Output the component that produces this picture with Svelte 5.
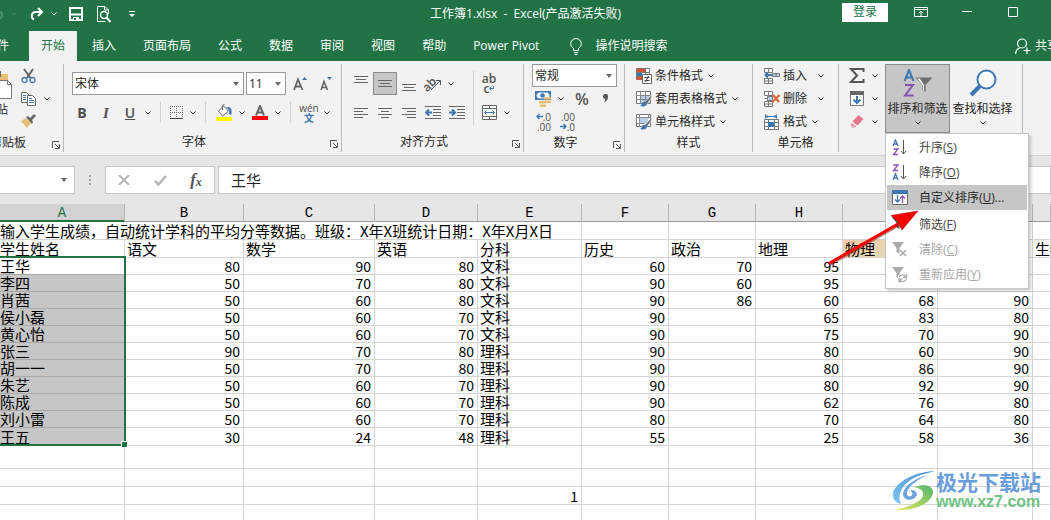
<script lang="ts">
  type Cell = string | number;

  const tabs = ['插入', '页面布局', '公式', '数据', '审阅', '视图', '帮助', 'Power Pivot'];

  const columns = [
    { name: 'A', width: 125 },
    { name: 'B', width: 119 },
    { name: 'C', width: 131 },
    { name: 'D', width: 103 },
    { name: 'E', width: 104 },
    { name: 'F', width: 87 },
    { name: 'G', width: 87 },
    { name: 'H', width: 87 },
    { name: 'I', width: 95 },
    { name: 'J', width: 95 },
  ];

  const headings: Cell[] = ['学生姓名', '语文', '数学', '英语', '分科', '历史', '政治', '地理', '物理', '', '生物'];

  const students: Cell[][] = [
    ['王华', 80, 90, 80, '文科', 60, 70, 95, '', '', ''],
    ['李四', 50, 70, 80, '文科', 90, 60, 95, '', '', ''],
    ['肖茜', 50, 60, 80, '文科', 90, 86, 60, 68, 90, ''],
    ['侯小磊', 50, 60, 70, '文科', 90, '', 65, 83, 80, ''],
    ['黄心怡', 50, 60, 70, '文科', 90, '', 75, 70, 90, ''],
    ['张三', 90, 70, 80, '理科', 90, '', 80, 60, 90, ''],
    ['胡一一', 50, 70, 80, '理科', 90, '', 80, 86, 90, ''],
    ['朱艺', 50, 60, 70, '理科', 90, '', 80, 92, 90, ''],
    ['陈成', 50, 60, 70, '理科', 90, '', 62, 76, 80, ''],
    ['刘小雷', 50, 60, 70, '理科', 80, '', 70, 64, 80, ''],
    ['王五', 30, 24, 48, '理科', 55, '', 25, 58, 36, ''],
  ];

  const blank: Cell[] = Array(11).fill('');
  const tail: Cell[][] = [blank, blank, blank.map((c, i) => (i === 4 ? 1 : c)), blank];

  const menu = [
    { icon: 'asc', text: '升序', key: 'S' },
    { icon: 'desc', text: '降序', key: 'O' },
    { icon: 'custom', text: '自定义排序', key: 'U', more: true, active: true },
    { icon: 'filter', text: '筛选', key: 'F', divided: true },
    { icon: 'clear', text: '清除', key: 'C', disabled: true },
    { icon: 'reapply', text: '重新应用', key: 'Y', disabled: true },
  ];

  let fontName = $state('宋体');
  let fontSize = $state('11');
  let numberFormat = $state('常规');
  let formula = $state('王华');
  let cellName = $state('');
</script>

{#snippet chev()}
  <svg class="chev" width="6" height="4" viewBox="0 0 6 4"><path d="M.5 .5 3 3 5.500 .5" /></svg>
{/snippet}

{#snippet drop(label: string)}
  <button class="drop" aria-label={label}>{@render chev()}</button>
{/snippet}

{#snippet launcher(label: string)}
  <button class="launcher" aria-label={label}>
    <svg width="8" height="8" viewBox="0 0 8 8" fill="none" stroke="#555"><path d="M.5 7V.5H7M3 3l4 4M7.500 3v4.500H3" /></svg>
  </button>
{/snippet}

{#snippet lines(rows: number[][])}
  <svg width="16" height="16" viewBox="0 0 16 16" stroke="#666">
    {#each rows as [x1, x2, y]}
      <path d="M{x1} {y}.5H{x2}" />
    {/each}
  </svg>
{/snippet}

{#snippet indent(right: boolean)}
  <svg width="16" height="14" viewBox="0 0 16 14" fill="none" stroke="#666">
    <path d="M0 .5h16M8 3.500h8M8 6.500h8M8 9.500h8M0 12.500h16" />
    {#if right}
      <path d="M0 6.500h5M3 3.500l3 3-3 3" stroke="#3c78b4" stroke-width="2" />
    {:else}
      <path d="M7 6.500H2M4 3.500l-3 3 3 3" stroke="#3c78b4" stroke-width="2" />
    {/if}
  </svg>
{/snippet}

{#snippet tableIcon(kind: string)}
  <svg width="16" height="16" viewBox="0 0 16 16" fill="none">
    {#if kind === 'cond'}
      <path d="M.5 .5h13v11H.5zM9.500 .5v11M.5 4.500h13M.5 8.500h13" stroke="#777" fill="#fff" />
      <path d="M1 1h8v3H1zM1 9h5v3H1z" fill="#d8512f" />
      <path d="M1 5h5v3H1z" fill="#3c78b4" />
      <path d="M6.500 6.500h9v9h-9z" fill="#fff" stroke="#666" />
      <path d="M8.500 9.500h5M8.500 12.500h5M12.500 8l-3 6" stroke="#444" />
    {:else}
      <path d="M.5 .5h14v12H.5z" fill="#fff" stroke="#777" />
      <path d={kind === 'table' ? 'M5 5h9v7H5z' : 'M4 4h8v5H4z'} fill="#b7cde8" />
      <path d={kind === 'table' ? 'M.5 4.500h14M.5 8.500h14M4.500 .5v12M9.500 .5v12' : 'M.5 3.500h14M3.500 .5v12M.5 9.500h8M12.500 .5v4'} stroke="#8a8a8a" />
      <path d="M15.500 4 9 11l2 2 4.500-7z" fill="#666" stroke="#f2f2f2" stroke-width=".5" />
      <path d="M9 10.500c-3 0-2.500 3-5 4.500 4 1 7 0 7-2.500z" fill="#3c78b4" />
    {/if}
  </svg>
{/snippet}

{#snippet cellsIcon(kind: string)}
  <svg width="16" height="16" viewBox="0 0 16 16" fill="none" stroke="#777">
    {#if kind === 'format'}
      <path d="M1 2.500h12M1.500 .5v4M12.500 .5v4M3.500 1 2 2.500 3.500 4M10.500 1 12 2.500 10.500 4" stroke="#3c78b4" />
      <path d="M.5 5.500h14v10H.5zM4.500 5.500v10M10.500 5.500v10M.5 8.500h14M.5 12.500h14" fill="#fff" />
      <path d="M4 8h6v5H4z" fill="#3c78b4" stroke="none" />
    {:else}
      <path d="M.5 .5h8v4h-8zM4.500 .5v4M.5 10.500h8v5h-8zM4.500 10.500v5M.5 13h8" fill="#fff" />
      {#if kind === 'insert'}
        <path d="M8.500 5.500h7v3h-7zM12 5.500v3" fill="#b7cde8" />
        <path d="M8 7H2M4 4.500 1.500 7 4 9.500" stroke="#3c78b4" stroke-width="2" />
      {:else}
        <path d="M.5 7.500h3M3.500 5.500h5v4h-5z" fill="#b7cde8" />
        <path d="m9 4 6 7M15.500 4 8.500 11" stroke="#d9603b" stroke-width="2" />
      {/if}
    {/if}
  </svg>
{/snippet}

{#snippet funnel(color: string)}
  <path d="M0 1h12L7.500 7v6l-3-2V7z" fill={color} />
{/snippet}

{#snippet menuIcon(kind: string)}
  <svg width="16" height="17" viewBox="0 0 16 17" fill="none">
    {#if kind === 'asc' || kind === 'desc'}
      {@const up = kind === 'asc'}
      <path d={up ? 'M1 7 3.500 1 6 7M2 5h3' : 'M1 16 3.500 10 6 16M2 14h3'} stroke="#3c78b4" stroke-width="1.300" />
      <path d={up ? 'M1.500 10H6l-4.500 5.500H6' : 'M1.500 1H6L1.500 6.500H6'} stroke="#8a50b0" stroke-width="1.300" />
      <path d="M11.500 1v14M9 12l2.500 3 2.500-3" stroke="#555" />
    {:else if kind === 'custom'}
      <path d="M.5 1.500h15v14H.5z" fill="#fff" stroke="#666" />
      <path d="M0 1h16v4H0z" fill="#3c78b4" />
      <path d="M5.500 6v7M3 10.500 5.500 13 8 10.500" stroke="#3c78b4" stroke-width="1.300" />
      <path d="M10.500 14V7M8 9.500 10.500 7l2.500 2.500" stroke="#8a50b0" stroke-width="1.300" />
    {:else if kind === 'filter'}
      {@render funnel('#555')}
    {:else}
      {@render funnel('#aaa')}
      {#if kind === 'clear'}
        <path d="m8 9 6 6M14 9l-6 6" stroke="#aaa" stroke-width="1.500" />
      {:else}
        <path d="M6 9h8v7H6z" fill="#fff" />
        <path d="M7 11a4 4 0 0 1 7 0M14.500 8v3.500H11M14.500 13a4 4 0 0 1-7 1M7 16.500V13h3.500" stroke="#aaa" stroke-width="1.300" />
      {/if}
    {/if}
  </svg>
{/snippet}

<div class="app">
  <header class="titlebar">
    <div class="quick">
      <button class="tool dim" aria-label="撤销">
        <svg width="14" height="14" viewBox="0 0 14 14" fill="none" stroke="currentColor" stroke-width="2"><path d="M4 1 1 4l3 3M1 4h8a4 4 0 0 1 0 8" /></svg>
      </button>
      <button class="drop dim" aria-label="撤销列表">{@render chev()}</button>
      <button class="tool next" aria-label="恢复">
        <svg width="15" height="14" viewBox="0 0 15 14" fill="none" stroke="#fff" stroke-width="2"><path d="M9 1l4 4-4 4M13 5H6a4 4 0 0 0-1 7.500" /></svg>
      </button>
      {@render drop('恢复列表')}
      <button class="tool next" aria-label="保存">
        <svg width="14" height="14" viewBox="0 0 14 14" fill="none" stroke="#fff"><path d="M1 1h12v12H1z" stroke-width="2" /><path d="M2 7.500h10" stroke-width="2" /><path d="M4 10h6v4H4z" fill="#fff" stroke="none" /><path d="M5 11h2v2H5z" fill="#217346" stroke="none" /></svg>
      </button>
      <button class="tool next" aria-label="打印预览">
        <svg width="15" height="17" viewBox="0 0 15 17" fill="none" stroke="#fff"><path d="M11.500 8V4L8 .5H.5v15h8M7.500 .5V4h4" /><circle cx="7" cy="9" r="3.500" stroke-width="1.500" /><path d="m9.500 11.500 4 4.500" stroke-width="2" /></svg>
      </button>
      <button class="tool next" aria-label="自定义快速访问工具栏">
        <svg width="6" height="7" viewBox="0 0 6 7" fill="#fff"><path d="M0 0h6v1H0zM0 3h6L3 6z" /></svg>
      </button>
    </div>
    <h1>工作簿1.xlsx&nbsp; -&nbsp; Excel(产品激活失败)</h1>
    <div class="window-controls">
      <button class="login">登录</button>
      <button class="win" aria-label="功能区显示选项">
        <svg width="14" height="10" viewBox="0 0 14 10" fill="none" stroke="#fff"><path d="M.5 .5h13v9H.5zM.5 2.500h13M7 9V4M5 6l2-2 2 2" /></svg>
      </button>
      <button class="win" aria-label="最小化">
        <svg width="10" height="10" viewBox="0 0 10 10" stroke="#fff"><path d="M0 4.500h10" /></svg>
      </button>
      <button class="win" aria-label="最大化">
        <svg width="10" height="10" viewBox="0 0 10 10" fill="none" stroke="#fff"><path d="M.5 .5h9v9h-9z" /></svg>
      </button>
    </div>
  </header>

  <nav class="tabs">
    <button class="tab file">文件</button>
    <button class="tab current">开始</button>
    {#each tabs as tab}
      <button class="tab">{tab}</button>
    {/each}
    <button class="tell">
      <svg width="12" height="17" viewBox="0 0 12 17" fill="none" stroke="#fff"><path d="M3.500 12.500v-2C2 9 .7 8 .7 5.800a5.300 5.300 0 0 1 10.600 0C11.300 8 10 9 8.500 10.500v2zM4 14.500h4M4.500 16.500h3" /></svg>
      操作说明搜索
    </button>
    <button class="share">
      <svg width="16" height="17" viewBox="0 0 16 17" fill="none" stroke="#fff"><circle cx="7" cy="5.500" r="4.500" stroke-width="1.200" /><path d="M.6 16c0-3 1.500-5 4-6M12 9.500v6.500M8.500 12.500h7" stroke-width="1.200" /></svg>
      共享
    </button>
  </nav>

  <div class="ribbon">
    <section class="group clipboard">
      <div class="body">
        <button class="paste">
          <svg width="32" height="28" viewBox="0 0 32 28" fill="none"><path d="M2 3h26v20H2z" fill="#e9be73" /><path d="M9 0h12v6H9z" fill="#6a6a6a" /><path d="M15.500 9.500h12l4 4v14h-16zM27.500 9.500v4h4" fill="#fff" stroke="#777" /></svg>
          <span>粘贴</span>
          {@render chev()}
        </button>
        <div class="stack">
          <div class="row">
            <button class="tool" aria-label="剪切">
              <svg width="16" height="16" viewBox="0 0 16 16" fill="none"><path d="m3 1 6.500 9M12 1 6 10" stroke="#666" stroke-width="2" /><circle cx="3.500" cy="12" r="2.500" stroke="#3c78b4" stroke-width="1.300" /><circle cx="11.500" cy="12" r="2.500" stroke="#3c78b4" stroke-width="1.300" /></svg>
            </button>
          </div>
          <div class="row">
            <button class="tool" aria-label="复制">
              <svg width="16" height="14" viewBox="0 0 16 14" fill="#fff" stroke="#666"><path d="M.5 .5h5l2 2v8h-7z" /><path d="M2 3.500h3M2 5.500h3M2 7.500h3" stroke="#3c78b4" /><path d="M6.500 3.500h5l3 3v7h-8z" /><path d="M8 6.500h3M8 8.500h5M8 10.500h5" stroke="#3c78b4" /></svg>
            </button>
            {@render drop('复制选项')}
          </div>
          <div class="row">
            <button class="tool" aria-label="格式刷">
              <svg width="16" height="15" viewBox="0 0 16 15"><path d="M0 7l5-3 5 5-4 5z" fill="#e9be73" /><path d="m5 3 2-1 2 2 4-4 2 2-4 4 1 2-1 2z" fill="#666" /></svg>
            </button>
          </div>
        </div>
      </div>
      <footer><span>剪贴板</span>{@render launcher('剪贴板设置')}</footer>
    </section>

    <section class="group font">
      <div class="body rows">
        <div class="row boxes">
          <div class="combo name">
            <select bind:value={fontName} aria-label="字体"><option>宋体</option></select>
          </div>
          <div class="combo size">
            <select bind:value={fontSize} aria-label="字号"><option>11</option></select>
          </div>
          <button class="tool" aria-label="增大字号">
            <svg width="14" height="15" viewBox="0 0 14 15" fill="none"><path d="m1 14 4-10.500L9.500 14M2.500 10.500h5.500" stroke="#666" stroke-width="1.800" /><path d="M9 4h5l-2.500-3z" fill="#3c78b4" /></svg>
          </button>
          <button class="tool" aria-label="减小字号">
            <svg width="14" height="15" viewBox="0 0 14 15" fill="none"><path d="m2 14 3-8.500L8.500 14M3 11.500h4.500" stroke="#666" stroke-width="1.600" /><path d="M8 1h5l-2.500 3z" fill="#3c78b4" /></svg>
          </button>
        </div>
        <div class="row">
          <button class="tool letter bold">B</button>
          <button class="tool letter italic">I</button>
          <button class="tool letter underline">U</button>
          {@render drop('下划线')}
          <span class="rule"></span>
          <button class="tool narrow" aria-label="边框">
            <svg width="14" height="14" viewBox="0 0 14 14" fill="none" stroke="#666"><path d="M0 .5h13M.5 0v12M6.500 0v12M12.500 0v12M0 6.500h13" stroke-dasharray="1 1" /><path d="M0 12.500h13" stroke="#444" /></svg>
          </button>
          {@render drop('边框样式')}
          <span class="rule"></span>
          <button class="tool" aria-label="填充颜色">
            <svg width="16" height="17" viewBox="0 0 16 17" fill="none"><path d="m7.500 2 5 5-6 5-4-5z" fill="#fff" stroke="#666" /><path d="M6.500 6V2q0-2 2-1" stroke="#666" /><path d="M10 3q5-.500 5.500 3v5l-2.500-1V6z" fill="#3c78b4" /><path d="M0 13h16v4H0z" fill="#ff0" /></svg>
          </button>
          {@render drop('填充颜色列表')}
          <button class="tool" aria-label="字体颜色">
            <svg width="16" height="15" viewBox="0 0 16 15" fill="none"><path d="M4 10.500 8 1l4 9.500M5.500 7.500h5" stroke="#666" stroke-width="2" /><path d="M0 11h16v4H0z" fill="red" /></svg>
          </button>
          {@render drop('字体颜色列表')}
          <span class="rule"></span>
          <button class="tool phonetic"><span>wén</span><b>文</b></button>
          {@render drop('拼音选项')}
        </div>
      </div>
      <footer><span>字体</span>{@render launcher('字体设置')}</footer>
    </section>

    <section class="group align">
      <div class="body">
        <div class="rows">
          <div class="row">
            <button class="tool" aria-label="顶端对齐">{@render lines([[1, 15, 0], [3, 13, 3], [1, 15, 6]])}</button>
            <button class="tool on" aria-label="垂直居中">{@render lines([[1, 15, 4], [3, 13, 7], [1, 15, 10]])}</button>
            <button class="tool" aria-label="底端对齐">{@render lines([[1, 15, 8], [3, 13, 11], [1, 15, 14]])}</button>
            <button class="tool" aria-label="方向">
              <svg width="18" height="16" viewBox="0 0 18 16" fill="none"><text x="-2" y="12" transform="rotate(-45 6 8)" font-size="12" font-weight="600" fill="#555">ab</text><path d="m7 14 9-9M12 4.500h4.500V9" stroke="#555" /></svg>
            </button>
            {@render drop('方向选项')}
          </div>
          <div class="row">
            <button class="tool" aria-label="左对齐">{@render lines([[1, 15, 3], [1, 10, 6], [1, 15, 9], [1, 10, 12]])}</button>
            <button class="tool" aria-label="居中">{@render lines([[1, 15, 3], [4, 12, 6], [1, 15, 9], [4, 12, 12]])}</button>
            <button class="tool" aria-label="右对齐">{@render lines([[1, 15, 3], [6, 15, 6], [1, 15, 9], [6, 15, 12]])}</button>
            <button class="tool" aria-label="减少缩进量">{@render indent(false)}</button>
            <button class="tool" aria-label="增加缩进量">{@render indent(true)}</button>
          </div>
        </div>
        <span class="rule tall"></span>
        <div class="rows">
          <div class="row">
            <button class="tool wrap">
              <span>ab</span>
              <span>c<svg width="5" height="5" viewBox="0 0 5 5" fill="none" stroke="#3c78b4"><path d="M4.500 0v2.500H1M2.500 .5l-2 2 2 2" /></svg></span>
            </button>
          </div>
          <div class="row">
            <button class="tool" aria-label="合并后居中">
              <svg width="15" height="15" viewBox="0 0 15 15" fill="#fff" stroke="#666"><path d="M.5 .5h14v14H.5zM.5 3.500h14M.5 11.500h14M7.500 .5v3M7.500 11.500v3" /><path d="M3 7.500h9M4.500 5.500l-2 2 2 2M10.500 5.500l2 2-2 2" fill="none" stroke="#3c78b4" /></svg>
            </button>
            {@render drop('合并选项')}
          </div>
        </div>
      </div>
      <footer><span>对齐方式</span>{@render launcher('对齐设置')}</footer>
    </section>

    <section class="group number">
      <div class="body stack">
        <div class="combo format">
          <select bind:value={numberFormat} aria-label="数字格式"><option>常规</option></select>
        </div>
        <div class="row">
          <button class="tool" aria-label="会计数字格式">
            <svg width="16" height="16" viewBox="0 0 16 16"><path d="M0 0h16v9H0z" fill="#3c78b4" /><path d="M1.500 1.500h13v6h-13z" fill="#fff" /><path d="M1 1h3L1 4zM15 1v3l-3-3zM1 8V5l3 3z" fill="#3c78b4" /><circle cx="7.500" cy="4.500" r="2.300" fill="#3c78b4" /><path d="M9 6h7v2.500H9zM9 9.500h7V12H9zM4 10h6v2.500H4zM5 13.500h6V16H5z" fill="#e9be73" /></svg>
          </button>
          {@render drop('货币列表')}
          <button class="tool percent">%</button>
          <button class="tool" aria-label="千位分隔样式">
            <svg width="6" height="9" viewBox="0 0 6 9"><path d="M2.500 0A2.300 2.300 0 0 1 5 2.500C5 5 4 7 1 8.500c.7-1.500 1.300-2.500 1.300-3.700A2.400 2.400 0 0 1 2.500 0z" fill="#555" /></svg>
          </button>
        </div>
        <div class="row">
          <button class="tool decimals">
            <span><svg width="7" height="7" viewBox="0 0 7 7" fill="none" stroke="#3c78b4" stroke-width="1.500"><path d="M7 3.500H1M3.500 1 1 3.500 3.500 6" /></svg>.0</span>
            <span>.00</span>
          </button>
          <button class="tool decimals">
            <span>.00</span>
            <span><svg width="7" height="7" viewBox="0 0 7 7" fill="none" stroke="#3c78b4" stroke-width="1.500"><path d="M0 3.500h6M3.500 1 6 3.500 3.500 6" /></svg>.0</span>
          </button>
        </div>
      </div>
      <footer><span>数字</span>{@render launcher('数字设置')}</footer>
    </section>

    <section class="group styles">
      <div class="body stack">
        <button class="command">{@render tableIcon('cond')}<span>条件格式</span>{@render chev()}</button>
        <button class="command">{@render tableIcon('table')}<span>套用表格格式</span>{@render chev()}</button>
        <button class="command">{@render tableIcon('cell')}<span>单元格样式</span>{@render chev()}</button>
      </div>
      <footer><span>样式</span></footer>
    </section>

    <section class="group cells">
      <div class="body stack">
        <button class="command split">{@render cellsIcon('insert')}<span>插入</span>{@render chev()}</button>
        <button class="command split">{@render cellsIcon('delete')}<span>删除</span>{@render chev()}</button>
        <button class="command">{@render cellsIcon('format')}<span>格式</span>{@render chev()}</button>
      </div>
      <footer><span>单元格</span></footer>
    </section>

    <section class="group editing">
      <div class="body">
        <div class="stack">
          <div class="row">
            <button class="tool" aria-label="自动求和">
              <svg width="16" height="15" viewBox="0 0 16 15" fill="none" stroke="#555" stroke-width="2"><path d="M14.500 4V1H2l6 6.500L2 14h12.500v-3" /></svg>
            </button>
            {@render drop('求和选项')}
          </div>
          <div class="row">
            <button class="tool" aria-label="填充">
              <svg width="14" height="15" viewBox="0 0 14 15" fill="none"><path d="M.5 .5h13v14H.5z" fill="#fff" stroke="#777" /><path d="M0 0h14v4H0z" fill="#666" /><path d="M7 5v7M3.500 8.500 7 12l3.500-3.500" stroke="#3c78b4" stroke-width="2" /></svg>
            </button>
            {@render drop('填充选项')}
          </div>
          <div class="row">
            <button class="tool" aria-label="清除">
              <svg width="14" height="13" viewBox="0 0 14 13"><path d="m8.500 0 5 4-6 6.500-5-4z" fill="#e8768a" /><path d="m2 7.500 4.500 4-1.500 1H2L.5 10z" fill="#f0a0ae" /></svg>
            </button>
            {@render drop('清除选项')}
          </div>
        </div>
        <div class="big-wrap">
          <button class="big on" aria-haspopup="menu" aria-expanded="true">
            <svg width="30" height="28" viewBox="0 0 30 28" fill="none"><path d="M1.500 12 6 1l4.500 11M3 8.500h6" stroke="#3c78b4" stroke-width="2" /><path d="M2 16h8L2 26.500h8.500" stroke="#8a50b0" stroke-width="2" /><path d="M12.500 8.500h17L22.500 16v7l-3-2v-5z" fill="#707070" /><path d="M14.500 9.500h2l4.500 6v6h-1v-5z" fill="#fff" /></svg>
            <span>排序和筛选</span>
            {@render chev()}
          </button>
          <div class="menu" role="menu">
            {#each menu as item}
              <button class="item" class:active={item.active} class:divided={item.divided} disabled={item.disabled} role="menuitem">
                {@render menuIcon(item.icon)}
                <span>{item.text}(<u>{item.key}</u>){item.more ? '...' : ''}</span>
              </button>
            {/each}
            <svg class="pointer" width="92" height="56" viewBox="0 0 92 56">
              <path d="M1 54.500 69 15.500" stroke="#7a1010" stroke-opacity=".5" stroke-width="4" />
              <path d="M1 53.500 70 14" stroke="#f00" stroke-width="3" />
              <path d="M90 1 63 5.500 69 11 74 20z" fill="#f00" stroke="#b01010" stroke-width=".6" />
            </svg>
          </div>
        </div>
        <button class="big">
          <svg width="28" height="28" viewBox="0 0 28 28" fill="none" stroke="#3c78b4"><circle cx="17.500" cy="10.500" r="9" fill="#fff" stroke-width="2" /><path d="M11 17 2 26" stroke-width="4" /></svg>
          <span>查找和选择</span>
          {@render chev()}
        </button>
      </div>
      <footer></footer>
    </section>
  </div>

  <div class="formula-bar">
    <div class="combo cell-name"><input bind:value={cellName} aria-label="名称框" /></div>
    <span class="dots"><i></i><i></i><i></i></span>
    <div class="entry">
      <button aria-label="取消"><svg width="12" height="10" viewBox="0 0 12 10" stroke="#b5b5b5" stroke-width="2"><path d="m1 0 10 10M11 0 1 10" /></svg></button>
      <button aria-label="输入"><svg width="13" height="11" viewBox="0 0 13 11" fill="none" stroke="#b5b5b5" stroke-width="2.500"><path d="m1 6 3.500 3.500L12 1" /></svg></button>
      <button class="fx">f<small>x</small></button>
    </div>
    <input class="formula" bind:value={formula} aria-label="编辑栏" />
  </div>

  <table>
    <colgroup>
      {#each columns as col}
        <col style="width: {col.width}px" />
      {/each}
      <col />
    </colgroup>
    <thead>
      <tr>
        {#each columns as col, i}
          <th class:picked={i === 0}>{col.name}</th>
        {/each}
        <th></th>
      </tr>
    </thead>
    <tbody>
      <tr class="high">
        <td colspan="5">输入学生成绩，自动统计学科的平均分等数据。班级：X年X班统计日期：X年X月X日</td>
        {#each Array(6) as _}
          <td></td>
        {/each}
      </tr>
      <tr class="high">
        {#each headings as text}
          <td class:shaded={text === '物理'}>{text}</td>
        {/each}
      </tr>
      {#each students as row, r}
        <tr class:high={r === students.length - 1}>
          {#each row as cell, c}
            <td class:num={typeof cell === 'number'} class:selected={c === 0} class:origin={c === 0 && r === 0}>
              {cell}
              {#if c === 0 && r === 0}<span class="selection"></span>{/if}
            </td>
          {/each}
        </tr>
      {/each}
      {#each tail as row, r}
        <tr class={r === 0 ? 'higher' : 'high'}>
          {#each row as cell}
            <td class:num={cell !== ''}>{cell}</td>
          {/each}
        </tr>
      {/each}
    </tbody>
  </table>

  <div class="brand">
    <svg width="44" height="42" viewBox="0 0 44 42">
      <defs>
        <linearGradient id="sky" x1="1" y1="0" x2="0" y2="1"><stop offset="0" stop-color="#4a90d0" /><stop offset="1" stop-color="#7cc4f0" /></linearGradient>
        <linearGradient id="leaf" x1="1" y1="0" x2="0" y2="1"><stop offset="0" stop-color="#4fb86c" /><stop offset="1" stop-color="#e6e860" /></linearGradient>
      </defs>
      <path d="M43 1C22 2 4 12 1 23c-1 7 4 10 8 11-4-8 0-20 15-27C30 4 37 3 43 1z" fill="url(#sky)" />
      <path d="M36 5C24 8 12 15 11 24c0 7 11 8 14 1 0-4-4-6-8-4 3 0 4 2 3 4-2 3-6 1-5-3C17 15 27 9 36 5z" fill="#6aa5de" />
      <path d="M22 17c11-4 20-1 19 6C39 34 22 41 4 40c12-3 26-8 27-15 1-5-4-7-9-8z" fill="url(#leaf)" />
    </svg>
    <div>
      <strong>极光下载站</strong>
      <span>www.xz7.com</span>
    </div>
  </div>
</div>

<style>
  :global(body) {
    background: #fff;
  }

  .app {
    position: relative;
    height: 100vh;
    overflow: hidden;
    font: 12px/16px 'Open Sans', 'Noto Sans CJK SC', sans-serif;
    color: #262626;
  }

  button,
  input,
  select {
    font: inherit;
    color: inherit;
    margin: 0;
    padding: 0;
    border: 0;
    border-radius: 0;
    background: none;
    outline: 0;
    box-sizing: border-box;
  }

  button {
    white-space: nowrap;
  }

  svg {
    display: block;
    flex: none;
  }

  .titlebar {
    display: grid;
    grid-template-columns: 1fr auto 1fr;
    height: 31px;
    background: #217346;
    color: #fff;
  }

  h1 {
    margin: 6px 0 0;
    font: inherit;
  }

  .quick {
    display: flex;
    align-items: center;
    height: 28px;
    margin-left: -16px;
  }

  .quick .next {
    margin-left: 4px;
  }

  .dim {
    color: #4f9470;
  }

  .window-controls {
    display: flex;
    justify-content: flex-end;
    align-items: center;
    height: 24px;
    margin-right: 15px;
  }

  .login {
    width: 46px;
    height: 19px;
    margin-right: 10px;
    background: #fff;
    color: #217346;
  }

  .win {
    display: flex;
    justify-content: center;
    width: 46px;
  }

  .tabs {
    display: flex;
    gap: 3px;
    height: 30px;
    padding-left: 0;
    background: #217346;
    color: #fff;
  }

  .tab {
    padding: 0 12px;
  }

  .file {
    margin: 0 5px 0 -27px;
  }

  .current {
    background: #f2f2f2;
    color: #217346;
  }

  .tell,
  .share {
    display: flex;
    align-items: center;
    gap: 13px;
  }

  .tell {
    margin-left: 16px;
  }

  .share {
    gap: 4px;
    width: 36px;
    margin-left: auto;
  }

  .ribbon {
    display: flex;
    padding: 3px 0;
    background: #f2f2f2;
    border-bottom: 1px solid #d2d2d2;
  }

  .group {
    display: flex;
    flex-direction: column;
    flex: none;
    height: 88px;
    border-right: 1px solid #b8b8b8;
    box-sizing: border-box;
  }

  .body {
    display: flex;
    flex: 1;
  }

  .group footer {
    display: flex;
    align-items: center;
    height: 20px;
  }

  .group footer span {
    flex: 1;
    text-align: center;
  }

  .launcher {
    padding: 4px 3px 0 6px;
  }

  .row {
    display: flex;
    align-items: center;
    height: 23px;
  }

  .stack {
    display: flex;
    flex-direction: column;
  }

  .rows {
    display: flex;
    flex-direction: column;
    gap: 6px;
    padding-top: 8px;
  }

  .tool {
    display: flex;
    align-items: center;
    justify-content: center;
    width: 24px;
    height: 23px;
  }

  .narrow {
    width: 20px;
  }

  .on {
    background: #c6c6c6;
    box-shadow: inset 0 0 0 1px #8c8c8c;
  }

  .drop {
    display: flex;
    align-items: center;
    justify-content: center;
    width: 12px;
    height: 23px;
  }

  .chev {
    fill: none;
    stroke: currentColor;
  }

  .rule {
    width: 1px;
    height: 21px;
    margin: 0 6px;
    background: #d0d0d0;
  }

  .rule.tall {
    height: 54px;
    margin: 7px 3px 0 4px;
  }

  .letter {
    font-size: 14px;
    color: #505050;
  }

  .bold {
    font-weight: 700;
  }

  .italic {
    font-family: 'Liberation Serif', serif;
    font-size: 15px;
    font-style: italic;
    font-weight: 700;
  }

  .underline {
    font-weight: 600;
    text-decoration: underline;
  }

  .phonetic,
  .wrap,
  .decimals {
    flex-direction: column;
    line-height: 10px;
    color: #505050;
  }

  .phonetic {
    font-size: 10px;
  }

  .phonetic b {
    color: #3c78b4;
  }

  .wrap span,
  .decimals span {
    display: flex;
    align-items: center;
  }

  .wrap {
    font-weight: 600;
  }

  .decimals {
    align-items: flex-end;
    padding-right: 4px;
    font-size: 10px;
  }

  .percent {
    margin-left: 3px;
    font-size: 16px;
    font-weight: 600;
    color: #555;
  }

  .combo {
    display: grid;
    align-items: center;
    height: 23px;
    box-sizing: border-box;
    border: 1px solid #999;
    background: #fff;
  }

  .combo::after {
    content: '';
    grid-area: 1 / 1;
    justify-self: end;
    margin-right: 4px;
    border: 3px solid transparent;
    border-top: 4px solid #666;
    border-bottom: 0;
    pointer-events: none;
  }

  .combo select,
  .combo input {
    grid-area: 1 / 1;
    width: 100%;
    height: 21px;
    padding: 0 2px;
    appearance: none;
  }

  .boxes {
    gap: 2px;
    padding-left: 2px;
  }

  .name {
    width: 172px;
  }

  .size {
    width: 40px;
  }

  .format {
    width: 85px;
    margin-left: 1px;
  }

  .clipboard {
    margin-left: -30px;
  }

  .clipboard .body {
    padding: 0 10px 0 5px;
  }

  .paste {
    display: flex;
    flex-direction: column;
    align-items: center;
    gap: 3px;
    width: 42px;
    padding-top: 7px;
  }

  .font .body {
    padding: 8px 3px 0 6px;
  }

  .align .body {
    padding: 0 10px 0 7px;
  }

  .number .body {
    padding: 0 6px 0 7px;
  }

  .styles .body {
    padding: 0 14px 0 11px;
  }

  .cells .body {
    padding: 0 14px 0 11px;
  }

  .editing .body {
    padding: 0 7px 0 6px;
  }

  .command {
    display: flex;
    align-items: center;
    gap: 3px;
    height: 23px;
  }

  .command .chev {
    margin-left: 2px;
  }

  .split .chev {
    margin-left: 8px;
  }

  .big-wrap {
    position: relative;
    margin-left: 4px;
  }

  .big {
    display: flex;
    flex-direction: column;
    align-items: center;
    width: 65px;
    height: 69px;
    padding-top: 5px;
  }

  .big span {
    margin: 4px 0;
  }

  .menu {
    position: absolute;
    top: 69px;
    left: 0;
    z-index: 2;
    width: 144px;
    padding: 1px;
    box-sizing: border-box;
    border: 1px solid #c6c6c6;
    background: #fff;
    box-shadow: 2px 2px 3px #0003;
  }

  .item {
    display: flex;
    align-items: center;
    gap: 11px;
    width: 100%;
    height: 25px;
    padding-left: 5px;
    color: #444;
  }

  .item.active {
    background: #c6c6c6;
    color: #262626;
  }

  .item.divided {
    margin-top: 2px;
  }

  .item:disabled {
    color: #a6a6a6;
  }

  .pointer {
    position: absolute;
    top: 76px;
    left: -58px;
  }

  .formula-bar {
    display: flex;
    height: 28px;
    padding: 10px 0;
    background: #e6e6e6;
  }

  .cell-name,
  .entry,
  .formula {
    height: 28px;
    border: 1px solid #c6c6c6;
    background: #fff;
    box-sizing: border-box;
  }

  .cell-name {
    width: 75px;
    border-left: 0;
  }

  .cell-name::after {
    margin-right: 7px;
  }

  .dots {
    display: flex;
    flex-direction: column;
    justify-content: center;
    align-items: center;
    gap: 2px;
    width: 30px;
  }

  .dots i {
    width: 2px;
    height: 2px;
    background: #a0a0a0;
  }

  .entry {
    display: flex;
    width: 110px;
    margin-right: 3px;
  }

  .entry button {
    display: flex;
    flex: 1;
    align-items: center;
    justify-content: center;
  }

  .fx {
    font: italic 700 17px 'Liberation Serif', serif;
    color: #555;
  }

  .fx small {
    font-size: 12px;
    padding-top: 4px;
  }

  .formula {
    flex: 1;
    padding: 0 12px 2px;
    font-size: 15px;
  }

  table {
    width: 100%;
    table-layout: fixed;
    border-collapse: separate;
    border-spacing: 0;
    color: #000;
  }

  th {
    height: 18px;
    padding: 2px 0 0;
    box-sizing: border-box;
    border-right: 1px solid #b5b5b5;
    border-bottom: 1px solid #9b9b9b;
    background: #e6e6e6;
    font: 14px/15px 'Liberation Mono', monospace;
  }

  .picked {
    border-bottom-color: #217346;
    background: #d2d2d2;
    box-shadow: inset 0 -1px #217346;
    color: #217346;
  }

  td {
    height: 17px;
    padding: 0 3px 0 2px;
    box-sizing: border-box;
    border-right: 1px solid #d4d4d4;
    border-bottom: 1px solid #d4d4d4;
    font: 15px/16px 'Noto Sans CJK SC', sans-serif;
    white-space: nowrap;
  }

  td:first-child {
    padding-left: 0;
  }

  .high td {
    height: 18px;
  }

  .higher td {
    height: 23px;
  }

  .num {
    font-size: 14px;
    text-align: right;
  }

  .shaded {
    background: linear-gradient(160deg, #f8cbad, #d3e0b4);
  }

  .selected {
    border-bottom-color: #a8a8a8;
    background: #c6c6c6;
  }

  .origin {
    position: relative;
    background: #fff;
  }

  .selection {
    position: absolute;
    top: -2px;
    left: -2px;
    right: -2px;
    z-index: 1;
    height: 190px;
    box-sizing: border-box;
    border: 2px solid #217346;
  }

  .selection::after {
    content: '';
    position: absolute;
    right: -4px;
    bottom: -4px;
    width: 5px;
    height: 5px;
    border: 1px solid #fff;
    background: #217346;
  }

  .brand {
    position: absolute;
    right: 10px;
    bottom: 8px;
    display: flex;
    align-items: center;
    color: #6a9edb;
  }

  .brand div {
    display: flex;
    flex-direction: column;
  }

  .brand strong {
    font-size: 21px;
    line-height: 22px;
  }

  .brand span {
    font: 700 16px/18px 'Liberation Sans', sans-serif;
    color: #6fc283;
  }
</style>
